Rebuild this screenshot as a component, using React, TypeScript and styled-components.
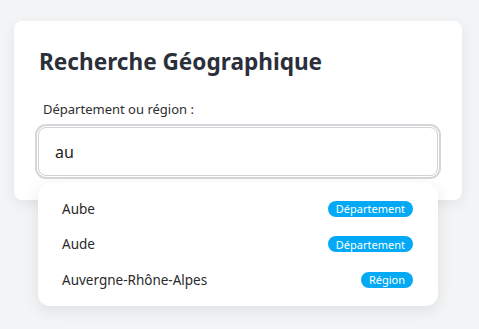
import React, {FC, useState} from 'react';
import styled, {createGlobalStyle} from 'styled-components';

const GlobalStyle = createGlobalStyle`
  html, body {
    margin: 0;
    padding: 0;
    background: #f3f4f6;
    font-family: "Noto Sans", "Open Sans", sans-serif;
  }
`

const Page = styled.div`
  width: 479px;
  height: 329px;
  padding: 21px 17px 0 14px;
  box-sizing: border-box;
`

const SearchCard = styled.div`
  background-color: white;
  border-radius: 8px;
  box-shadow: 0 4px 14px rgba(0, 0, 0, 0.07);
  padding: 26px 24px 24px;
`

const Title = styled.h2`
  margin: 0 0 23px 1px;
  font-size: 22.6px;
  line-height: 30px;
  font-weight: 700;
  color: #2b2f3b;
`

const FieldLabel = styled.label`
  display: block;
  margin: 0 0 9px 5px;
  font-size: 13px;
  line-height: 18px;
  color: #2e2e2e;
`

const Field = styled.div`
  position: relative;
`

const SearchInput = styled.input`
  display: block;
  width: 100%;
  height: 49px;
  box-sizing: border-box;
  padding: 0 16px;
  border: 1px solid #d2d2d6;
  border-radius: 8px;
  box-shadow: 0 0 0 1px #fff, 0 0 0 3px #d6d6da;
  outline: none;
  font-family: inherit;
  font-size: 16px;
  color: #222;
`

const Suggestions = styled.ul`
  position: absolute;
  top: calc(100% + 7px);
  left: 0;
  right: 0;
  margin: 0;
  padding: 8px 0;
  list-style: none;
  background: white;
  border-radius: 12px;
  box-shadow: 0 4px 16px rgba(0, 0, 0, 0.09);
`

const Suggestion = styled.li`
  display: flex;
  align-items: center;
  justify-content: space-between;
  height: 35.5px;
  padding: 0 25px 0 24px;
  font-size: 13.5px;
  color: #2a2a2a;
  cursor: pointer;
`

const Badge = styled.span`
  display: inline-flex;
  align-items: center;
  height: 16px;
  padding: 0 8px;
  border-radius: 8px;
  background: #03a9f4;
  color: white;
  font-size: 11px;
`

const results = [
    {name: 'Aube', kind: 'Département'},
    {name: 'Aude', kind: 'Département'},
    {name: 'Auvergne-Rhône-Alpes', kind: 'Région'},
]

const App: FC = () => {
    const [query, setQuery] = useState('au');

    return (
        <Page>
            <GlobalStyle/>
            <SearchCard>
                <Title>Recherche Géographique</Title>
                <FieldLabel htmlFor='geo'>Département ou région :</FieldLabel>
                <Field>
                    <SearchInput id='geo' value={query} onChange={e => setQuery(e.target.value)}/>
                    <Suggestions>
                        {results.map(r => (
                            <Suggestion key={r.name}>
                                <span>{r.name}</span>
                                <Badge>{r.kind}</Badge>
                            </Suggestion>
                        ))}
                    </Suggestions>
                </Field>
            </SearchCard>
        </Page>
    );
}

export default App;
